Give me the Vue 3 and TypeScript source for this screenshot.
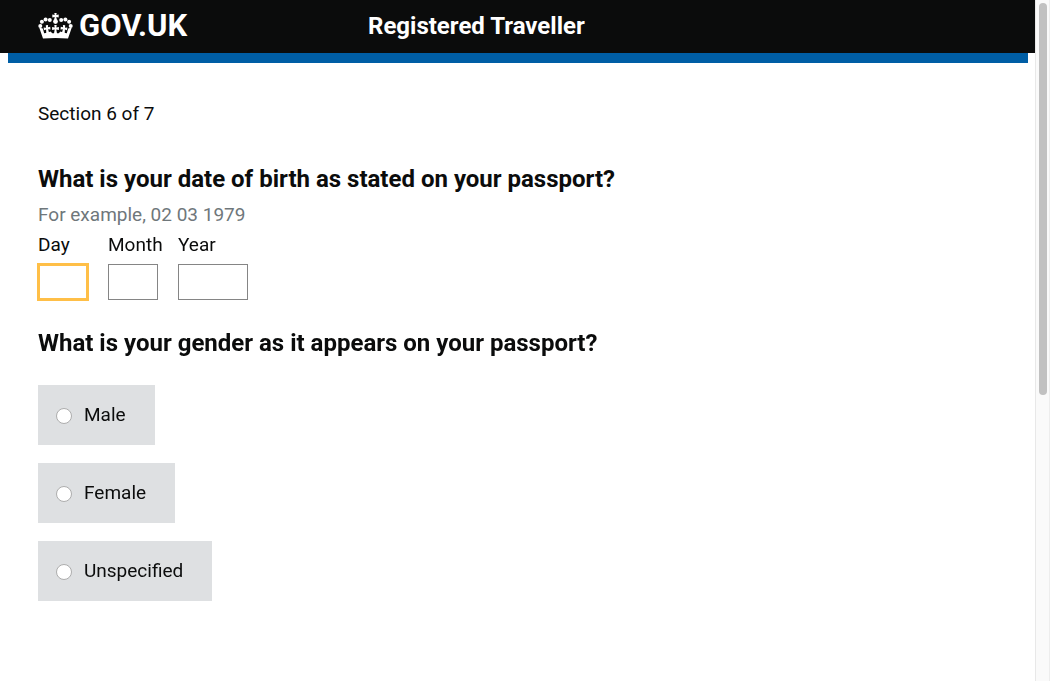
<script setup lang="ts">
import { onMounted, ref } from 'vue'

interface DateField {
  id: string
  label: string
  maxlength: number
}

const dateFields: DateField[] = [
  { id: 'day', label: 'Day', maxlength: 2 },
  { id: 'month', label: 'Month', maxlength: 2 },
  { id: 'year', label: 'Year', maxlength: 4 },
]

const dateValues = ref<Record<string, string>>({ day: '', month: '', year: '' })
const genders: string[] = ['Male', 'Female', 'Unspecified']
const gender = ref<string>('')

onMounted(() => {
  document.getElementById('day')?.focus()
})
</script>

<template>
  <div class="window">
    <div class="page">
      <header class="header">
        <a class="logo" href="#" aria-label="GOV.UK">
          <svg class="crown" viewBox="0 0 35 26" aria-hidden="true">
            <g fill="currentColor">
              <circle cx="2.3" cy="13" r="2" />
              <circle cx="3.9" cy="8.8" r="2" />
              <circle cx="7.6" cy="6.4" r="2" />
              <circle cx="11.8" cy="7.1" r="2" />
              <circle cx="23.2" cy="7.1" r="2" />
              <circle cx="27.4" cy="6.4" r="2" />
              <circle cx="31.1" cy="8.8" r="2" />
              <circle cx="32.7" cy="13" r="2" />
              <circle cx="17.5" cy="8.6" r="2.4" />
              <path d="M16.3 0h2.4l-.4 2 2.4-.5v3l-2.4-.5.6 3h-2.8l.6-3-2.4.5v-3l2.4.5z" />
              <path d="M16.3 12h2.4l-.4 2.500 2.600-.5v3l-2.600-.5.8 4.500h-3.200l.8-4.500-2.600.5v-3l2.600.5z" />
              <path d="M7.800 12.200l2.300-.2-.2 2.300 2.300-.6.3 2.700-2.400-.2 1.200 4.300-3 .4-.2-4.400-2.100.8-.4-2.700 2.400.1z" />
              <path d="M27.200 12.200l-2.300-.2.2 2.300-2.300-.6-.3 2.700 2.400-.2-1.200 4.300 3 .4.2-4.400 2.100.8.4-2.700-2.400.1z" />
              <path d="M1.200 14.500l3.600 1 1.400 4.700q3.500 0 6.300-1.800l1.800 1.800h6.400l1.800-1.800q2.800 1.800 6.300 1.800l1.400-4.700 3.600-1L30 25.600q-12.500-1.200-25 0z" />
            </g>
          </svg>
          <span class="wordmark">GOV.UK</span>
        </a>
        <a class="service" href="#">Registered Traveller</a>
      </header>
      <div class="bar"></div>

      <main class="content">
        <p class="section">Section 6 of 7</p>
        <form>
          <fieldset class="dob">
            <legend>What is your date of birth as stated on your passport?</legend>
            <p id="dob-hint" class="hint">For example, 02 03 1979</p>
            <div class="date">
              <div v-for="field in dateFields" :key="field.id" class="field">
                <label :for="field.id">{{ field.label }}</label>
                <input
                  :id="field.id"
                  v-model="dateValues[field.id]"
                  :class="{ year: field.id === 'year' }"
                  type="text"
                  inputmode="numeric"
                  :maxlength="field.maxlength"
                  aria-describedby="dob-hint"
                />
              </div>
            </div>
          </fieldset>

          <fieldset class="gender">
            <legend>What is your gender as it appears on your passport?</legend>
            <div class="options">
              <label v-for="option in genders" :key="option" class="option">
                <input v-model="gender" type="radio" name="gender" :value="option" />
                <span>{{ option }}</span>
              </label>
            </div>
          </fieldset>
        </form>
      </main>
    </div>
    <div class="scrollbar" aria-hidden="true"><div class="thumb"></div></div>
  </div>
</template>

<style>
body {
  margin: 0;
  background: #fff;
}
</style>

<style scoped>
.window {
  display: flex;
  min-height: 100vh;
  color: #0b0c0c;
  font-family: Roboto, "Noto Sans", sans-serif;
  font-size: 19px;
  line-height: 25px;
}
.page {
  flex: 1;
  min-width: 0;
}
.header {
  display: grid;
  grid-template-columns: 330px 1fr;
  align-items: center;
  height: 53px;
  padding: 0 38px;
  background: #0b0c0c;
}
.header a {
  color: #fff;
  text-decoration: none;
}
.logo {
  display: flex;
  align-items: center;
  gap: 6px;
  padding-bottom: 1px;
}
.crown {
  width: 35px;
  height: 26px;
}
.wordmark {
  font-size: 31px;
  font-weight: 700;
  line-height: 30px;
}
.service {
  padding-bottom: 2px;
  font-size: 24px;
  font-weight: 700;
  line-height: 30px;
}
.bar {
  height: 10px;
  margin: 0 7px 0 8px;
  background: #005ea5;
}
.content {
  padding: 38px;
}
.section {
  margin: 0 0 38px;
}
fieldset {
  min-width: 0;
  margin: 0;
  padding: 0;
  border: 0;
}
legend {
  padding: 0;
  font-size: 24px;
  font-weight: 700;
  line-height: 30px;
}
.hint {
  margin: 8px 0 5px;
  color: #6f777b;
}
.date {
  display: flex;
  gap: 20px;
}
.field {
  display: flex;
  flex-direction: column;
  gap: 7px;
  width: 50px;
}
.field input {
  box-sizing: border-box;
  width: 50px;
  height: 36px;
  padding: 4px;
  border: 1px solid #858585;
  border-radius: 0;
  background: #fff;
  font: inherit;
}
.field input.year {
  width: 70px;
}
.field input:focus {
  outline: 3px solid #ffbf47;
  outline-offset: -2px;
}
.gender {
  margin-top: 28px;
}
.options {
  display: flex;
  flex-direction: column;
  align-items: flex-start;
  gap: 18px;
  margin-top: 27px;
}
.option {
  display: flex;
  align-items: center;
  gap: 12px;
  box-sizing: border-box;
  height: 60px;
  padding: 0 29px 2px 18px;
  background: #dee0e2;
}
.option input {
  appearance: none;
  box-sizing: border-box;
  width: 16px;
  height: 16px;
  margin: 4px 0 0;
  border: 1px solid #adadad;
  border-radius: 50%;
  background: #fff;
}
.option input:checked {
  border: 5px solid #005ea5;
}
.scrollbar {
  box-sizing: border-box;
  width: 15px;
  padding: 3px 2px 3px 3px;
  border-right: 1px solid #ededed;
  border-left: 1px solid #e8e8e8;
  background: #fafafa;
}
.thumb {
  width: 8px;
  height: 58%;
  border-radius: 4px;
  background: #c1c1c1;
}
</style>
